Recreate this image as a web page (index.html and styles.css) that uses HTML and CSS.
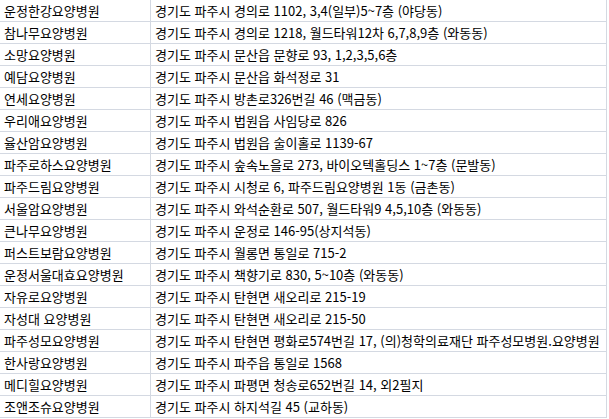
FILE: index.html
```html
<!DOCTYPE html>
<html lang="ko">
<head>
<meta charset="utf-8">
<link rel="stylesheet" href="styles.css">
</head>
<body>
<table class="sheet">
<tbody>
<tr><td class="name">운정한강요양병원</td><td class="addr">경기도 파주시 경의로 1102, 3,4(일부)5~7층 (야당동)</td></tr>
<tr><td class="name">참나무요양병원</td><td class="addr">경기도 파주시 경의로 1218, 월드타워12차 6,7,8,9층 (와동동)</td></tr>
<tr><td class="name">소망요양병원</td><td class="addr">경기도 파주시 문산읍 문향로 93, 1,2,3,5,6층</td></tr>
<tr><td class="name">예담요양병원</td><td class="addr">경기도 파주시 문산읍 화석정로 31</td></tr>
<tr><td class="name">연세요양병원</td><td class="addr">경기도 파주시 방촌로326번길 46 (맥금동)</td></tr>
<tr><td class="name">우리애요양병원</td><td class="addr">경기도 파주시 법원읍 사임당로 826</td></tr>
<tr><td class="name">율산암요양병원</td><td class="addr">경기도 파주시 법원읍 술이홀로 1139-67</td></tr>
<tr><td class="name">파주로하스요양병원</td><td class="addr">경기도 파주시 숲속노을로 273, 바이오텍홀딩스 1~7층 (문발동)</td></tr>
<tr><td class="name">파주드림요양병원</td><td class="addr">경기도 파주시 시청로 6, 파주드림요양병원 1동 (금촌동)</td></tr>
<tr><td class="name">서울암요양병원</td><td class="addr">경기도 파주시 와석순환로 507, 월드타워9 4,5,10층 (와동동)</td></tr>
<tr><td class="name">큰나무요양병원</td><td class="addr">경기도 파주시 운정로 146-95(상지석동)</td></tr>
<tr><td class="name">퍼스트보람요양병원</td><td class="addr">경기도 파주시 월롱면 통일로 715-2</td></tr>
<tr><td class="name">운정서울대효요양병원</td><td class="addr">경기도 파주시 책향기로 830, 5~10층 (와동동)</td></tr>
<tr><td class="name">자유로요양병원</td><td class="addr">경기도 파주시 탄현면 새오리로 215-19</td></tr>
<tr><td class="name">자성대 요양병원</td><td class="addr">경기도 파주시 탄현면 새오리로 215-50</td></tr>
<tr><td class="name">파주성모요양병원</td><td class="addr">경기도 파주시 탄현면 평화로574번길 17, (의)청학의료재단 파주성모병원.요양병원</td></tr>
<tr><td class="name">한사랑요양병원</td><td class="addr">경기도 파주시 파주읍 통일로 1568</td></tr>
<tr><td class="name">메디힐요양병원</td><td class="addr">경기도 파주시 파평면 청송로652번길 14, 외2필지</td></tr>
<tr><td class="name">조앤조슈요양병원</td><td class="addr">경기도 파주시 하지석길 45 (교하동)</td></tr>
</tbody>
</table>
</body>
</html>
```
FILE: styles.css
```css
html, body {
  margin: 0;
  padding: 0;
  background: #ffffff;
}

.sheet {
  border-collapse: separate;
  border-spacing: 0;
  table-layout: fixed;
  width: 607px;
  font-family: "Noto Sans CJK KR", "Noto Sans", sans-serif;
  font-size: 13px;
  color: #000000;
}

.sheet td {
  height: 22px;
  padding: 0 0 0 4px;
  border-right: 1px solid #d4d9e2;
  border-bottom: 1px solid #d4d9e2;
  white-space: nowrap;
  overflow: hidden;
  line-height: 21px;
  box-sizing: border-box;
  vertical-align: middle;
}

.sheet .name {
  width: 151px;
}

.sheet .addr {
  width: 456px;
}
```
